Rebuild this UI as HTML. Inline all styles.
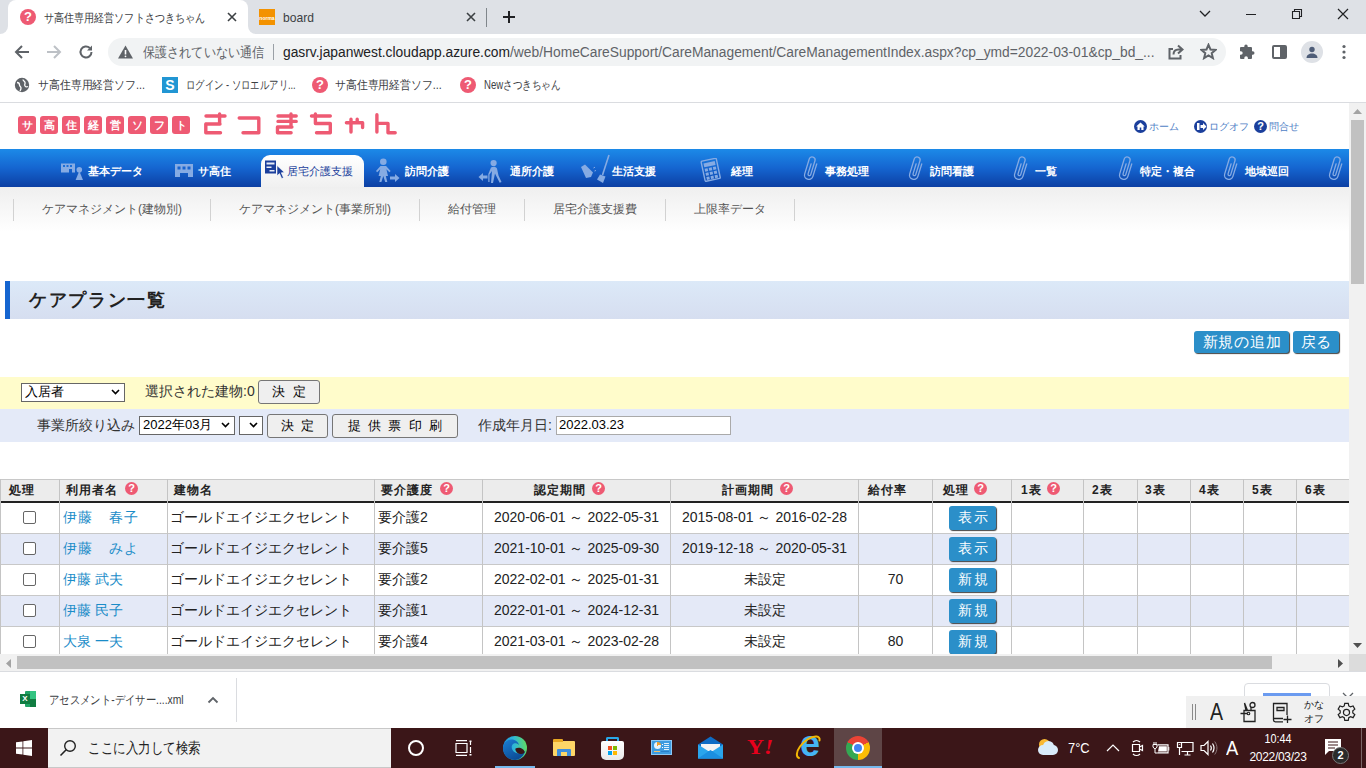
<!DOCTYPE html>
<html lang="ja">
<head>
<meta charset="utf-8">
<title>care plan</title>
<style>
*{box-sizing:border-box;margin:0;padding:0}
html,body{width:1366px;height:768px;overflow:hidden;background:#fff;font-family:"Liberation Sans",sans-serif;color:#202124}
.abs{position:absolute}
#root{position:relative;width:1366px;height:768px;overflow:hidden}
/* chrome */
#tabbar{left:0;top:0;width:1366px;height:34px;background:#dee1e6}
#tab1{left:8px;top:0;width:240px;height:34px;background:#fff;border-radius:8px 8px 0 0}
.tabtxt{font-size:12px;color:#3c4043;top:10px;white-space:nowrap;transform-origin:0 50%}
#toolbar{left:0;top:34px;width:1366px;height:35px;background:#fff}
#omni{left:108px;top:38px;width:1118px;height:28px;border-radius:14px;background:#f1f3f4}
#bm{left:0;top:69px;width:1366px;height:33px;background:#fff}
#bmline{left:0;top:102px;width:1366px;height:1px;background:#dadce0}
.bmt{font-size:12px;color:#3c4043;top:77px;white-space:nowrap;transform-origin:0 50%}
/* page */
#page{left:0;top:103px;width:1349px;height:551px;background:#fff;overflow:hidden}
#vs{left:1349px;top:103px;width:17px;height:551px;background:#f1f1f1}
#vthumb{left:1351px;top:120px;width:13px;height:164px;background:#c1c1c1}
#hs{left:0;top:654px;width:1349px;height:17px;background:#f1f1f1}
#hthumb{left:17px;top:656px;width:1255px;height:13px;background:#c1c1c1}
#corner{left:1349px;top:654px;width:17px;height:17px;background:#dcdcdc}
#shelfline{left:0;top:671px;width:1366px;height:1px;background:#dadce0}
#shelf{left:0;top:672px;width:1366px;height:56px;background:#fff}
#taskbar{left:0;top:728px;width:1366px;height:40px;background:#3b1618}

/* page content */
.lbox{top:13px;width:18px;height:18px;background:#ee5a73;border-radius:3px;color:#fff;font-size:11px;font-weight:bold;line-height:18px;text-align:center}
.lbig{top:5px;font-size:30px;font-weight:bold;color:#ee5a73;line-height:34px;white-space:nowrap}
.toplink{top:17px;font-size:10px;color:#4f7fc6;white-space:nowrap;line-height:13px}
.ticon{top:17px;width:13px;height:13px;border-radius:50%;background:#1b3f9c}
#nav{left:0;top:46px;width:1349px;height:38px;background:linear-gradient(#1c8ae8 0%,#1565d0 50%,#0c3fa3 100%)}
#navact{left:261px;top:52px;width:103px;height:32px;background:linear-gradient(#ffffff,#f0f0f0);border-radius:9px 9px 0 0}
.nt{top:61px;font-size:11px;font-weight:bold;color:#fff;white-space:nowrap;line-height:14px}
.nta{color:#1b3f9c;font-weight:normal}
#sub{left:0;top:84px;width:1349px;height:45px;background:linear-gradient(#efefef,#ffffff)}
.sep{top:96px;width:1px;height:22px;background:#d2d2d2}
.st{top:99px;font-size:12px;color:#555;white-space:nowrap;line-height:15px}
#ttl{left:5px;top:178px;width:1344px;height:38px;background:linear-gradient(#dce9f8,#d6def0);border-left:5px solid #1565d0}
#ttlt{left:29px;top:185px;font-size:18px;font-weight:bold;color:#222;line-height:24px;white-space:nowrap;letter-spacing:1.7px}
.bbtn{top:228px;height:22px;background:#2b8fc9;border-radius:3px;color:#fff;font-size:15px;line-height:22px;text-align:center;box-shadow:1px 1px 1px #444;white-space:nowrap;letter-spacing:.8px;padding-left:1px}
#yrow{left:0;top:274px;width:1349px;height:32px;background:#fffccb}
#brow{left:0;top:306px;width:1349px;height:33px;background:#e4eaf8}
.sel{background:#fff;border:1px solid #666;border-radius:0;font-size:13px;line-height:16px;color:#000;white-space:nowrap;padding-left:3px}
.gbtn{background:#efefef;border:1px solid #767676;border-radius:3px;font-size:13px;color:#000;text-align:center;white-space:nowrap}
.ft{font-size:14px;color:#333;white-space:nowrap;line-height:18px}
.inp{background:#fff;border:1px solid #aaa;font-size:13px;line-height:16px;padding-left:2px;color:#000}

/* table */
#thead{left:0;top:376px;width:1349px;height:24px;background:#ececec;border-top:1px solid #c8c8c8;border-bottom:2px solid #222}
.vl{top:376px;width:1px;height:176px;background:#c4c4c4}
.row{left:0;width:1349px;height:31px;border-bottom:1px solid #c8c8c8}
.alt{background:#e4e9f7}
.th{top:380px;font-size:12px;font-weight:bold;color:#222;white-space:nowrap;line-height:15px;letter-spacing:1px}
.q{width:13px;height:13px;border-radius:50%;background:#ee5a73;top:379px;color:#fff;font-size:11px;font-weight:bold;line-height:13px;text-align:center}
.td{font-size:14px;color:#222;white-space:nowrap;line-height:18px}
.lnk{color:#1a8cc8}
.cb{left:23px;width:13px;height:13px;border:1px solid #666;border-radius:2px;background:#fff}
.rb{left:949px;width:47px;height:24px;background:#2b8fc9;border-radius:3px;color:#fff;font-size:14px;line-height:23px;text-align:center;box-shadow:1px 1px 1px #444;letter-spacing:2px;padding-left:2px}

.qi{width:16px;height:16px;border-radius:50%;background:#ee5a73;color:#fff;font-size:13px;font-weight:bold;line-height:16px;text-align:center}
.ic{stroke:#5f6368;fill:none;stroke-width:2}

.tw{color:#fff;white-space:nowrap}
.ti{stroke:#fff;fill:none;stroke-width:1.2}
</style>
</head>
<body>
<div id="root">
<!-- CHROME -->
<div id="tabbar" class="abs"></div>
<div id="tab1" class="abs"></div>
<div id="toolbar" class="abs"></div>
<div id="omni" class="abs"></div>
<div id="bm" class="abs"></div>
<div id="bmline" class="abs"></div>
<div class="abs qi" style="left:20px;top:9px">?</div>
<div class="abs tabtxt" style="transform:scaleX(.8385);left:44px">サ高住専用経営ソフトさつきちゃん</div>
<svg class="abs" style="left:226px;top:11px" width="12" height="12" viewBox="0 0 12 12"><path d="M2 2l8 8M10 2l-8 8" stroke="#3c4043" stroke-width="1.6" fill="none"/></svg>
<div class="abs" style="left:248px;top:26px;width:8px;height:8px;background:#fff"></div><div class="abs" style="left:248px;top:18px;width:16px;height:16px;background:#dee1e6;border-radius:0 0 0 8px"></div>
<div class="abs" style="left:0px;top:26px;width:8px;height:8px;background:#fff"></div><div class="abs" style="left:-8px;top:18px;width:16px;height:16px;background:#dee1e6;border-radius:0 0 8px 0"></div>
<div class="abs" style="left:259px;top:9px;width:16px;height:16px;background:#f39200;color:#fff;font-size:5px;font-weight:bold;line-height:18px;text-align:center">norma</div>
<div class="abs tabtxt" style="transform:scaleX(.93);left:283px;font-size:13px;top:10px">board</div>
<svg class="abs" style="left:465px;top:11px" width="12" height="12" viewBox="0 0 12 12"><path d="M2 2l8 8M10 2l-8 8" stroke="#3c4043" stroke-width="1.6" fill="none"/></svg>
<div class="abs" style="left:486px;top:8px;width:1px;height:19px;background:#80868b"></div>
<svg class="abs" style="left:502px;top:10px" width="14" height="14" viewBox="0 0 14 14"><path d="M7 1v12M1 7h12" stroke="#202124" stroke-width="2" fill="none"/></svg>
<svg class="abs" style="left:1199px;top:10px" width="12" height="8" viewBox="0 0 12 8"><path d="M1 1l5 5 5-5" stroke="#202124" stroke-width="1.3" fill="none"/></svg>
<div class="abs" style="left:1246px;top:14px;width:10px;height:1px;background:#202124"></div>
<svg class="abs" style="left:1291px;top:8px" width="12" height="12" viewBox="0 0 12 12"><path d="M1.5 3.5h7v7h-7zM3.5 3.5v-2h7v7h-2" stroke="#202124" stroke-width="1.1" fill="none"/></svg>
<svg class="abs" style="left:1337px;top:8px" width="12" height="12" viewBox="0 0 12 12"><path d="M1 1l10 10M11 1L1 11" stroke="#202124" stroke-width="1.2" fill="none"/></svg>
<svg class="abs" style="left:14px;top:44px" width="16" height="16" viewBox="0 0 16 16"><path d="M15 8H2M8 2L2 8l6 6" class="ic" stroke="#5f6368"/></svg>
<svg class="abs" style="left:46px;top:44px" width="16" height="16" viewBox="0 0 16 16"><path d="M1 8h13M8 2l6 6-6 6" class="ic" style="stroke:#bdc1c6"/></svg>
<svg class="abs" style="left:78px;top:44px" width="16" height="16" viewBox="0 0 16 16"><path d="M13.5 8a5.5 5.5 0 1 1-1.7-4" class="ic"/><path d="M14 1.5v5h-5z" fill="#5f6368"/></svg>
<svg class="abs" style="left:118px;top:45px" width="15" height="14" viewBox="0 0 15 14"><path d="M7.5 0.5L15 13.5H0z" fill="#5f6368"/><path d="M7.5 5v4.5" stroke="#fff" stroke-width="1.6"/><circle cx="7.5" cy="11.3" r=".9" fill="#fff"/></svg>
<div id="sec" class="abs" style="transform:scaleX(.866);left:143px;top:43px;font-size:14px;color:#5f6368;white-space:nowrap;line-height:18px;transform-origin:0 50%">保護されていない通信</div>
<div class="abs" style="left:273px;top:44px;width:1px;height:16px;background:#9aa0a6"></div>
<div id="url" class="abs" style="transform-origin:0 50%;transform:scaleX(.9865);left:283px;top:43px;font-size:14px;color:#5f6368;white-space:nowrap;line-height:18px"><span style="color:#202124">gasrv.japanwest.cloudapp.azure.com</span>/web/HomeCareSupport/CareManagement/CareManagementIndex.aspx?cp_ymd=2022-03-01&amp;cp_bd_...</div>
<svg class="abs" style="left:1168px;top:44px" width="16" height="16" viewBox="0 0 16 16"><path d="M5 5H1.5v9.5h11V11" class="ic" stroke-width="1.5"/><path d="M10 1.5l4.5 4-4.5 4M14 5.5h-3.5c-3 0-5 2-5 5" class="ic" stroke-width="1.5"/></svg>
<svg class="abs" style="left:1200px;top:43px" width="17" height="17" viewBox="0 0 17 17"><path d="M8.5 1.8l2 4.7 5 .4-3.8 3.3 1.2 4.9-4.4-2.7-4.4 2.7 1.2-4.9L1.5 6.9l5-.4z" class="ic" stroke-width="1.5"/></svg>
<svg class="abs" style="left:1239px;top:43px" width="17" height="17" viewBox="0 0 17 17"><path d="M7 1.5a1.7 1.7 0 0 1 1.7 1.7V4H12a1 1 0 0 1 1 1v3.3h.8a1.7 1.7 0 0 1 0 3.4H13V15a1 1 0 0 1-1 1H8.9v-.9a1.8 1.8 0 0 0-3.6 0v.9H2a1 1 0 0 1-1-1v-3.200h.9a1.800 1.800 0 0 0 0-3.600H1V5a1 1 0 0 1 1-1h3.300V3.200A1.700 1.700 0 0 1 7 1.500z" fill="#5f6368"/></svg>
<svg class="abs" style="left:1272px;top:45px" width="15" height="14" viewBox="0 0 15 14"><rect x="1" y="1" width="13" height="12" rx="1" class="ic"/><rect x="8" y="1" width="6" height="12" fill="#5f6368"/></svg>
<div class="abs" style="left:1301px;top:41px;width:22px;height:22px;border-radius:50%;background:#dee1e6"></div><svg class="abs" style="left:1305px;top:45px" width="14" height="14" viewBox="0 0 14 14"><circle cx="7" cy="4.500" r="2.700" fill="#4e5d78"/><path d="M1.500 13c0-3 2.500-4.500 5.500-4.500s5.500 1.500 5.500 4.500z" fill="#4e5d78"/></svg>
<svg class="abs" style="left:1342px;top:44px" width="4" height="16" viewBox="0 0 4 16"><circle cx="2" cy="2.500" r="1.600" fill="#5f6368"/><circle cx="2" cy="8" r="1.600" fill="#5f6368"/><circle cx="2" cy="13.500" r="1.600" fill="#5f6368"/></svg>
<svg class="abs" style="left:14px;top:77px" width="16" height="16" viewBox="0 0 16 16"><circle cx="8" cy="8" r="7.200" fill="#5f6368"/><path d="M3 5.500c2 0 2.500 1 2.500 2.500S7 9.500 7 11s-1 3-1 3M9 2.500c0 1.500 1.500 1.500 2 3s-1 2 0 3.500 3 .5 3 .5" stroke="#fff" stroke-width="1.300" fill="none"/></svg>
<div class="abs bmt" style="transform:scaleX(.907);left:38px">サ高住専用経営ソフ...</div>
<div class="abs" style="left:162px;top:77px;width:16px;height:16px;background:#2196d3;color:#fff;font-size:14px;font-weight:bold;line-height:16px;text-align:center">S</div>
<div class="abs bmt" style="transform:scaleX(.78);left:186px">ログイン - ソロエルアリ...</div>
<div class="abs qi" style="left:312px;top:77px">?</div>
<div class="abs bmt" style="transform:scaleX(.904);left:335px">サ高住専用経営ソフ...</div>
<div class="abs qi" style="left:460px;top:77px">?</div>
<div class="abs bmt" style="transform:scaleX(.798);left:484px">Newさつきちゃん</div>
<!-- PAGE -->
<div id="page" class="abs">
<div class="abs lbox" style="left:18px">サ</div>
<div class="abs lbox" style="left:40px">高</div>
<div class="abs lbox" style="left:62px">住</div>
<div class="abs lbox" style="left:84px">経</div>
<div class="abs lbox" style="left:106px">営</div>
<div class="abs lbox" style="left:128px">ソ</div>
<div class="abs lbox" style="left:150px">フ</div>
<div class="abs lbox" style="left:172px">ト</div>
<svg class="abs" style="left:195px;top:1px" width="210" height="40" viewBox="195 104 210 40"><path d="M206 116H225M219.6 114V124M206 124H220M205.8 124V132.7M205.8 132.7H220.5M239.2 118H258.8M258.8 118V132.7M243 132.7H258.8M278 116H296.2M278 121.4H296.2M291 114V127M277.5 127H291.9M277.5 127V132.7M277.5 132.7H291.1M311.5 116H330.3M315.4 114V123.5M315.4 123.5H330.3M330.3 123.5V132.7M316.5 132.7H330.3M346.4 122.8H362.6M362.6 122.8V127.5M351 119.3V132M357.2 119.3V122.8M376.9 114.7V132M376.9 123.4H388M388 123.4V132.7M388 132.7H395.2" stroke="#ee5a73" stroke-width="3.400" stroke-linecap="round" stroke-linejoin="round" fill="none"/></svg>
<div class="abs ticon" style="left:1134px"></div><svg class="abs" style="left:1134px;top:17px" width="13" height="13" viewBox="0 0 13 13"><path d="M6.500 2.500l4.300 4h-1.300v3.500h-2.200v-2.500h-1.600v2.500h-2.200V6.500H2.200z" fill="#fff"/></svg><div class="abs toplink" style="left:1149px">ホーム</div>
<div class="abs ticon" style="left:1194px"></div><svg class="abs" style="left:1194px;top:17px" width="13" height="13" viewBox="0 0 13 13"><path d="M3 3h2.500v7H3zM6.500 5h2.500V3l3.500 3.500L9 10V8H6.500z" fill="#fff"/></svg><div class="abs toplink" style="left:1209px">ログオフ</div>
<div class="abs ticon" style="left:1254px;color:#fff;font-size:11px;font-weight:bold;line-height:13px;text-align:center">?</div><div class="abs toplink" style="left:1269px">問合せ</div>
<div id="nav" class="abs"></div><div id="navact" class="abs"></div>
<div class="abs nt" style="left:88px">基本データ</div>
<div class="abs nt" style="left:198px">サ高住</div>
<div class="abs nt nta" style="left:287px">居宅介護支援</div>
<div class="abs nt" style="left:405px">訪問介護</div>
<div class="abs nt" style="left:510px">通所介護</div>
<div class="abs nt" style="left:612px">生活支援</div>
<div class="abs nt" style="left:731px">経理</div>
<div class="abs nt" style="left:825px">事務処理</div>
<div class="abs nt" style="left:930px">訪問看護</div>
<div class="abs nt" style="left:1035px">一覧</div>
<div class="abs nt" style="left:1140px">特定・複合</div>
<div class="abs nt" style="left:1245px">地域巡回</div>
<svg class="abs" style="left:60px;top:59px" width="25" height="20" viewBox="0 0 25 20"><path d="M1 1.500h14v9h-3v-3.500h-3v3.500H1z" fill="#86abe3"/><path d="M3 3h2v2H3zM6.500 3h2v2h-2zM10 3h2v2h-2z" fill="#1a6ed8"/><circle cx="19.300" cy="7.800" r="2.800" fill="#86abe3"/><path d="M19.300 9l3.700 9h-7.400z" fill="#86abe3"/></svg>
<svg class="abs" style="left:175px;top:61px" width="18" height="14" viewBox="0 0 18 14"><path d="M0 0h18v13h-5v-4h-8v4H0z" fill="#86abe3"/><path d="M2.500 2.500h3v3h-3zM7.500 2.500h3v3h-3zM12.500 2.500h3v3h-3z" fill="#1663cf"/></svg>
<svg class="abs" style="left:264px;top:57px" width="22" height="22" viewBox="0 0 22 22"><path d="M1 .5h11v13H1z" fill="#1b3f9c"/><path d="M2.500 2.500h8v2h-8zM2.500 6.500h5v1.500h-5zM5.500 10h5v1.500h-5z" fill="#e8ecf6"/><path d="M13 5.500l7.500 7-3.200.3 2.200 5-1.800.8-2.200-5-2.500 2.200z" fill="#1b3f9c" stroke="#fff" stroke-width=".6"/></svg>
<svg class="abs" style="left:376px;top:55px" width="24" height="26" viewBox="0 0 24 26"><circle cx="7.300" cy="3.800" r="3.300" fill="#86abe3"/><path d="M4.500 8h5.600l4.500 5-1.200 1.200-3-3 1.600 6.800H9.800l1.500 6H9.200l-1.900-6-1.900 6H3.300l1.500-6H2.600l1.600-6.800-3 3L0 13z" fill="#86abe3"/><path d="M14 18.500h5v-2.500l4.500 4-4.500 4v-2.500h-5z" fill="#86abe3"/></svg>
<svg class="abs" style="left:478px;top:56px" width="26" height="25" viewBox="0 0 26 25"><circle cx="15.600" cy="4" r="3.100" fill="#86abe3"/><path d="M13 8.500c2-1.500 5-1 6 1l1.500 7 3 6.500-1.800.8-3.200-6.300-1.500-3-2 9.500h-2l1-12-2.500 3.500v7.500h-1.200v-8z" fill="#86abe3"/><path d="M9.500 16.500h-4.500v-2.500L.5 18l4.500 4v-2.500h4.500z" fill="#86abe3"/></svg>
<svg class="abs" style="left:580px;top:51px" width="32" height="30" viewBox="0 0 32 30"><path d="M1 13l4-2.500 8 8-2 4.500-5 1z" fill="#86abe3"/><path d="M13.500 14l1.500-.8M14.500 17l1.500-.5" stroke="#86abe3" stroke-width="1"/><path d="M29 1l-6.500 20" stroke="#86abe3" stroke-width="1.600"/><path d="M20 20.500l5.500 2-2.500 6.500-6-3.500z" fill="#86abe3"/></svg>
<svg class="abs" style="left:700px;top:55px" width="22" height="24" viewBox="0 0 22 24"><g transform="rotate(-12 11 12)"><rect x="3" y="1.500" width="15.500" height="20.500" rx="1" fill="none" stroke="#86abe3" stroke-width="1.400"/><path d="M5 4h11.500v4H5z" fill="#86abe3"/><path d="M5 9.500h3v3H5zM9.200 9.500h3v3h-3zM13.400 9.500h3v3h-3zM5 13.700h3v3H5zM9.200 13.700h3v3h-3zM13.400 13.700h3v3h-3zM5 17.900h3v3H5zM9.200 17.900h3v3h-3zM13.400 17.900h3v3h-3z" fill="#86abe3"/></g></svg>
<svg class="abs" style="left:800px;top:51px" width="22" height="30" viewBox="0 0 22 30"><g transform="rotate(17 11 15)"><path d="M15 8.500v13a4.300 4.300 0 0 1-8.600 0V6a3 3 0 0 1 6 0v14.500a1.400 1.400 0 0 1-2.800 0V10" fill="none" stroke="#86abe3" stroke-width="1.300" stroke-linecap="round"/></g></svg>
<svg class="abs" style="left:905px;top:51px" width="22" height="30" viewBox="0 0 22 30"><g transform="rotate(17 11 15)"><path d="M15 8.500v13a4.300 4.300 0 0 1-8.600 0V6a3 3 0 0 1 6 0v14.500a1.400 1.400 0 0 1-2.800 0V10" fill="none" stroke="#86abe3" stroke-width="1.300" stroke-linecap="round"/></g></svg>
<svg class="abs" style="left:1010px;top:51px" width="22" height="30" viewBox="0 0 22 30"><g transform="rotate(17 11 15)"><path d="M15 8.500v13a4.300 4.300 0 0 1-8.600 0V6a3 3 0 0 1 6 0v14.500a1.400 1.400 0 0 1-2.800 0V10" fill="none" stroke="#86abe3" stroke-width="1.300" stroke-linecap="round"/></g></svg>
<svg class="abs" style="left:1115px;top:51px" width="22" height="30" viewBox="0 0 22 30"><g transform="rotate(17 11 15)"><path d="M15 8.500v13a4.300 4.300 0 0 1-8.600 0V6a3 3 0 0 1 6 0v14.500a1.400 1.400 0 0 1-2.800 0V10" fill="none" stroke="#86abe3" stroke-width="1.300" stroke-linecap="round"/></g></svg>
<svg class="abs" style="left:1220px;top:51px" width="22" height="30" viewBox="0 0 22 30"><g transform="rotate(17 11 15)"><path d="M15 8.500v13a4.300 4.300 0 0 1-8.600 0V6a3 3 0 0 1 6 0v14.500a1.400 1.400 0 0 1-2.800 0V10" fill="none" stroke="#86abe3" stroke-width="1.300" stroke-linecap="round"/></g></svg>
<svg class="abs" style="left:1325px;top:51px" width="22" height="30" viewBox="0 0 22 30"><g transform="rotate(17 11 15)"><path d="M15 8.500v13a4.300 4.300 0 0 1-8.600 0V6a3 3 0 0 1 6 0v14.500a1.400 1.400 0 0 1-2.800 0V10" fill="none" stroke="#86abe3" stroke-width="1.300" stroke-linecap="round"/></g></svg>
<div id="sub" class="abs"></div>
<div class="abs sep" style="left:13px"></div>
<div class="abs sep" style="left:210px"></div>
<div class="abs sep" style="left:419px"></div>
<div class="abs sep" style="left:524px"></div>
<div class="abs sep" style="left:665px"></div>
<div class="abs sep" style="left:794px"></div>
<div class="abs st" style="left:42px">ケアマネジメント(建物別)</div>
<div class="abs st" style="left:239px">ケアマネジメント(事業所別)</div>
<div class="abs st" style="left:448px">給付管理</div>
<div class="abs st" style="left:553px">居宅介護支援費</div>
<div class="abs st" style="left:694px">上限率データ</div>
<div id="ttl" class="abs"></div><div id="ttlt" class="abs">ケアプラン一覧</div>
<div class="abs bbtn" style="left:1194px;width:95px">新規の追加</div><div class="abs bbtn" style="left:1293px;width:46px">戻る</div>
<div id="yrow" class="abs"></div><div id="brow" class="abs"></div>
<div class="abs sel" style="left:21px;top:280px;width:104px;height:19px">入居者<svg class="abs" style="right:4px;top:5px" width="9" height="6" viewBox="0 0 9 6"><path d="M1 1l3.5 3.5L8 1" fill="none" stroke="#000" stroke-width="1.6"/></svg></div>
<div class="abs ft" style="left:145px;top:279px">選択された建物:0</div>
<div class="abs gbtn" style="left:258px;top:277px;width:62px;height:24px;line-height:22px">決&nbsp;&nbsp;定</div>
<div class="abs ft" style="left:37px;top:313px">事業所絞り込み</div>
<div class="abs sel" style="left:139px;top:313px;width:96px;height:19px">2022年03月<svg class="abs" style="right:4px;top:5px" width="9" height="6" viewBox="0 0 9 6"><path d="M1 1l3.5 3.5L8 1" fill="none" stroke="#000" stroke-width="1.6"/></svg></div>
<div class="abs sel" style="left:239px;top:313px;width:24px;height:19px"><svg class="abs" style="right:4px;top:5px" width="9" height="6" viewBox="0 0 9 6"><path d="M1 1l3.5 3.5L8 1" fill="none" stroke="#000" stroke-width="1.6"/></svg></div>
<div class="abs gbtn" style="left:267px;top:311px;width:61px;height:24px;line-height:22px">決&nbsp;&nbsp;定</div>
<div class="abs gbtn" style="left:332px;top:311px;width:126px;height:24px;line-height:22px">提&nbsp;&nbsp;供&nbsp;&nbsp;票&nbsp;&nbsp;印&nbsp;&nbsp;刷</div>
<div class="abs ft" style="left:478px;top:313px">作成年月日:</div>
<div class="abs inp" style="left:556px;top:313px;width:175px;height:19px">2022.03.23</div>
<div class="abs row" style="top:400px"></div>
<div class="abs row alt" style="top:431px"></div>
<div class="abs row" style="top:462px"></div>
<div class="abs row alt" style="top:493px"></div>
<div class="abs row" style="top:524px"></div>
<div id="thead" class="abs"></div>
<div class="abs vl" style="left:0px"></div>
<div class="abs vl" style="left:59px"></div>
<div class="abs vl" style="left:167px"></div>
<div class="abs vl" style="left:374px"></div>
<div class="abs vl" style="left:482px"></div>
<div class="abs vl" style="left:670px"></div>
<div class="abs vl" style="left:858px"></div>
<div class="abs vl" style="left:932px"></div>
<div class="abs vl" style="left:1011px"></div>
<div class="abs vl" style="left:1083px"></div>
<div class="abs vl" style="left:1137px"></div>
<div class="abs vl" style="left:1190px"></div>
<div class="abs vl" style="left:1243px"></div>
<div class="abs vl" style="left:1296px"></div>
<div class="abs th" style="left:9px">処理</div>
<div class="abs th" style="left:66px">利用者名</div>
<div class="abs th" style="left:174px">建物名</div>
<div class="abs th" style="left:381px">要介護度</div>
<div class="abs th" style="left:534px">認定期間</div>
<div class="abs th" style="left:722px">計画期間</div>
<div class="abs th" style="left:868px">給付率</div>
<div class="abs th" style="left:943px">処理</div>
<div class="abs th" style="left:1021px">1表</div>
<div class="abs th" style="left:1092px">2表</div>
<div class="abs th" style="left:1145px">3表</div>
<div class="abs th" style="left:1199px">4表</div>
<div class="abs th" style="left:1252px">5表</div>
<div class="abs th" style="left:1305px">6表</div>
<div class="abs q" style="left:125px">?</div>
<div class="abs q" style="left:440px">?</div>
<div class="abs q" style="left:592px">?</div>
<div class="abs q" style="left:780px">?</div>
<div class="abs q" style="left:974px">?</div>
<div class="abs q" style="left:1047px">?</div>
<div class="abs cb" style="top:408px"></div>
<div class="abs td lnk" style="left:63px;top:405px" ><span style="letter-spacing:1.2px">伊藤　春子</span></div>
<div class="abs td" style="left:170px;top:405px">ゴールドエイジエクセレント</div>
<div class="abs td" style="left:378px;top:405px">要介護2</div>
<div class="abs td" style="left:483px;top:405px;width:187px;text-align:center">2020-06-01 ～ 2022-05-31</div>
<div class="abs td" style="left:671px;top:405px;width:187px;text-align:center">2015-08-01 ～ 2016-02-28</div>
<div class="abs rb" style="top:403px">表示</div>
<div class="abs cb" style="top:439px"></div>
<div class="abs td lnk" style="left:63px;top:436px"><span style="letter-spacing:1.2px">伊藤　みよ</span></div>
<div class="abs td" style="left:170px;top:436px">ゴールドエイジエクセレント</div>
<div class="abs td" style="left:378px;top:436px">要介護5</div>
<div class="abs td" style="left:483px;top:436px;width:187px;text-align:center">2021-10-01 ～ 2025-09-30</div>
<div class="abs td" style="left:671px;top:436px;width:187px;text-align:center">2019-12-18 ～ 2020-05-31</div>
<div class="abs rb" style="top:434px">表示</div>
<div class="abs cb" style="top:470px"></div>
<div class="abs td lnk" style="left:63px;top:467px">伊藤 武夫</div>
<div class="abs td" style="left:170px;top:467px">ゴールドエイジエクセレント</div>
<div class="abs td" style="left:378px;top:467px">要介護2</div>
<div class="abs td" style="left:483px;top:467px;width:187px;text-align:center">2022-02-01 ～ 2025-01-31</div>
<div class="abs td" style="left:671px;top:467px;width:187px;text-align:center">未設定</div>
<div class="abs td" style="left:859px;top:467px;width:73px;text-align:center">70</div>
<div class="abs rb" style="top:465px">新規</div>
<div class="abs cb" style="top:501px"></div>
<div class="abs td lnk" style="left:63px;top:498px">伊藤 民子</div>
<div class="abs td" style="left:170px;top:498px">ゴールドエイジエクセレント</div>
<div class="abs td" style="left:378px;top:498px">要介護1</div>
<div class="abs td" style="left:483px;top:498px;width:187px;text-align:center">2022-01-01 ～ 2024-12-31</div>
<div class="abs td" style="left:671px;top:498px;width:187px;text-align:center">未設定</div>
<div class="abs rb" style="top:496px">新規</div>
<div class="abs cb" style="top:532px"></div>
<div class="abs td lnk" style="left:63px;top:529px">大泉 一夫</div>
<div class="abs td" style="left:170px;top:529px">ゴールドエイジエクセレント</div>
<div class="abs td" style="left:378px;top:529px">要介護4</div>
<div class="abs td" style="left:483px;top:529px;width:187px;text-align:center">2021-03-01 ～ 2023-02-28</div>
<div class="abs td" style="left:671px;top:529px;width:187px;text-align:center">未設定</div>
<div class="abs td" style="left:859px;top:529px;width:73px;text-align:center">80</div>
<div class="abs rb" style="top:527px">新規</div>
</div>
<div id="vs" class="abs"></div><div id="vthumb" class="abs"></div>
<div id="hs" class="abs"></div><div id="hthumb" class="abs"></div><div id="corner" class="abs"></div>
<svg class="abs" style="left:1353px;top:109px" width="9" height="5" viewBox="0 0 9 5"><path d="M0 5l4.500-5L9 5z" fill="#a3a3a3"/></svg>
<svg class="abs" style="left:1353px;top:643px" width="9" height="5" viewBox="0 0 9 5"><path d="M0 0l4.500 5L9 0z" fill="#505050"/></svg>
<svg class="abs" style="left:6px;top:659px" width="5" height="9" viewBox="0 0 5 9"><path d="M5 0L0 4.500 5 9z" fill="#a3a3a3"/></svg>
<svg class="abs" style="left:1338px;top:659px" width="5" height="9" viewBox="0 0 5 9"><path d="M0 0l5 4.500L0 9z" fill="#505050"/></svg>
<div id="shelfline" class="abs"></div>
<div id="shelf" class="abs"></div>
<div class="abs" style="left:20px;top:691px;width:16px;height:16px"><div class="abs" style="left:5px;top:0;width:11px;height:16px;background:#21a366;border-radius:1px"></div><div class="abs" style="left:10px;top:0;width:6px;height:8px;background:#33c481"></div><div class="abs" style="left:10px;top:8px;width:6px;height:8px;background:#107c41"></div><div class="abs" style="left:0;top:3px;width:10px;height:10px;background:#107c41;color:#fff;font-size:8px;font-weight:bold;line-height:10px;text-align:center">X</div></div>
<div id="dl" class="abs" style="transform:scaleX(.863);left:49px;top:692px;font-size:12px;color:#3c4043;white-space:nowrap;line-height:16px;transform-origin:0 50%">アセスメント-デイサー....xml</div>
<svg class="abs" style="left:207px;top:696px" width="12" height="8" viewBox="0 0 12 8"><path d="M1.500 6.500l4.500-4.500 4.500 4.500" stroke="#5f6368" stroke-width="1.800" fill="none"/></svg>
<div class="abs" style="left:236px;top:678px;width:1px;height:44px;background:#dadce0"></div>
<div class="abs" style="left:1244px;top:683px;width:86px;height:32px;border:1px solid #dadce0;border-radius:4px;background:#fff"></div>
<div class="abs" style="left:1263px;top:693px;width:48px;height:4px;background:#6b9bf0"></div>
<svg class="abs" style="left:1342px;top:692px" width="12" height="12" viewBox="0 0 12 12"><path d="M1 1l10 10M11 1L1 11" stroke="#5f6368" stroke-width="1.300" fill="none"/></svg>
<div class="abs" style="left:1186px;top:696px;width:180px;height:32px;background:#f0f0f0"></div>
<div class="abs" style="left:1192px;top:704px;width:1px;height:16px;background:#8a8a8a"></div><div class="abs" style="left:1195px;top:704px;width:1px;height:16px;background:#8a8a8a"></div>
<div class="abs" style="left:1210px;top:699px;font-size:23px;line-height:26px;color:#222;transform:scaleX(.85);transform-origin:0 0">A</div>
<svg class="abs" style="left:1239px;top:701px" width="20" height="22" viewBox="0 0 20 22"><path d="M5 9.500h11v11H5zM1.500 12.500h8M7 9.500L5.500 2l3 7.500M12 9V6" stroke="#222" stroke-width="1.300" fill="none"/><circle cx="13.500" cy="4" r="2.500" stroke="#222" stroke-width="1.300" fill="none"/><circle cx="9.500" cy="12.500" r="1.300" stroke="#222" stroke-width="1.100" fill="#f0f0f0"/></svg>
<svg class="abs" style="left:1271px;top:702px" width="22" height="21" viewBox="0 0 22 21"><path d="M16 13V1.500H2.500v16.500a1.800 1.800 0 0 0 1.800 1.800H12M2.500 16.500h9.500M6 5.500h7v3H6zM12.500 17.500h8M16.500 13.500v8" stroke="#222" stroke-width="1.300" fill="none"/></svg>
<div class="abs" style="left:1303px;top:698px;font-size:10px;line-height:14px;color:#222;width:22px;text-align:center;white-space:nowrap">かな<br>オフ</div>
<svg class="abs" style="left:1336px;top:702px" width="21" height="21" viewBox="0 0 24 24"><path d="M12 8.500a3.500 3.500 0 1 0 0 7 3.500 3.500 0 0 0 0-7zM10 1.500h4l.6 3 2 1.100 2.900-1 2 3.500-2.300 2v2.300l2.300 2-2 3.500-2.900-1-2 1.100-.6 3h-4l-.6-3-2-1.100-2.900 1-2-3.500 2.300-2v-2.300l-2.300-2 2-3.500 2.900 1 2-1.100z" stroke="#222" stroke-width="1.400" fill="none"/></svg>
<div id="taskbar" class="abs"></div>
<svg class="abs" style="left:16px;top:740px" width="16" height="16" viewBox="0 0 16 16"><path d="M0 2.300l6.500-.900v6.200H0zM7.300 1.300L16 0v7.600H7.300zM0 8.400h6.500v6.200L0 13.700zM7.300 8.400H16V16l-8.700-1.300z" fill="#fff"/></svg>
<div class="abs" style="left:48px;top:728px;width:343px;height:40px;background:#f2f2f2;border-top:1px solid #c8c8c8;border-bottom:1px solid #c8c8c8"></div>
<svg class="abs" style="left:59px;top:739px" width="18" height="18" viewBox="0 0 18 18"><circle cx="11" cy="7" r="5.300" stroke="#222" stroke-width="1.400" fill="none"/><path d="M7.200 10.800L1.500 16.500" stroke="#222" stroke-width="1.600"/></svg>
<div id="srch" class="abs" style="transform:scaleX(.835);left:88px;top:738px;font-size:15px;line-height:20px;color:#222;white-space:nowrap;transform-origin:0 50%">ここに入力して検索</div>
<div class="abs" style="left:408px;top:740px;width:16px;height:16px;border:2px solid #fff;border-radius:50%"></div>
<svg class="abs" style="left:455px;top:740px" width="18" height="16" viewBox="0 0 18 16"><path d="M1 3.500h11v9H1zM1 .700h11M1 15.300h11M15.500 2v3M15.500 7v6" class="ti" stroke-width="1.400"/><path d="M14.500 .5h2v1.500h-2zM14.500 14h2v1.500h-2z" fill="#fff"/></svg>
<svg class="abs" style="left:502px;top:735px" width="26" height="26" viewBox="0 0 26 26"><defs><linearGradient id="eg1" x1="0" y1="0.300" x2="1" y2="0.200"><stop offset="0" stop-color="#1e8fdc"/><stop offset=".45" stop-color="#2fb8d8"/><stop offset="1" stop-color="#62dc5c"/></linearGradient><linearGradient id="eg2" x1="0" y1="0" x2="0.600" y2="1"><stop offset="0" stop-color="#1b7fd4"/><stop offset="1" stop-color="#0b4a94"/></linearGradient></defs><circle cx="13" cy="13" r="12" fill="url(#eg1)"/><path d="M1 13c0-5 4-8.500 8.500-8.500 4 0 7 2.500 7.500 5.500-1.500-1.500-3.500-2-5-1.500-2.500 1-3 4-1.500 6.500 1.700 2.800 5.500 4 9 3 1.500-.5 3-1.500 4-2.500-1.500 5.500-6 9.500-10.500 9.500C6 25 1 19.500 1 13z" fill="url(#eg2)"/><path d="M13.500 13.500c2-1 5-1 7 .5 2 1.500 2.500 3 1.500 4-1.500 1.200-4.500 1.500-6.500 0-1.500-1.200-2.500-3-2-4.500z" fill="#3a1517"/></svg>
<div class="abs" style="left:495px;top:766px;width:40px;height:2px;background:#76b9ed"></div>
<div class="abs" style="left:553px;top:741px;width:22px;height:15px;background:#fdd667;border-radius:1px"></div><div class="abs" style="left:553px;top:739px;width:10px;height:3px;background:#e8a823;border-radius:1px 1px 0 0"></div><div class="abs" style="left:557px;top:749px;width:14px;height:7px;background:#3f8fdc;border-radius:1px 1px 0 0"></div><div class="abs" style="left:561px;top:752px;width:6px;height:4px;background:#fdd667"></div>
<div class="abs" style="left:606px;top:737px;width:13px;height:7px;border:2px solid #29a8e8;border-bottom:none;border-radius:2px 2px 0 0"></div><div class="abs" style="left:601px;top:741px;width:23px;height:19px;background:linear-gradient(#fff,#e9e9e9);border-radius:2px 2px 5px 5px"></div><div class="abs" style="left:608px;top:746px;width:4px;height:4px;background:#f25022"></div><div class="abs" style="left:613px;top:746px;width:4px;height:4px;background:#7fba00"></div><div class="abs" style="left:608px;top:751px;width:4px;height:4px;background:#00a4ef"></div><div class="abs" style="left:613px;top:751px;width:4px;height:4px;background:#ffb900"></div>
<div class="abs" style="left:651px;top:740px;width:21px;height:15px;background:#3d9be0;border:1px solid #8cc8f5"></div><div class="abs" style="left:654px;top:742px;width:7px;height:7px;border-radius:50%;background:conic-gradient(#f0a030 0 90deg,#e8f4fd 90deg 360deg)"></div><div class="abs" style="left:664px;top:743px;width:5px;height:1px;background:#dff0fb;box-shadow:0 2px 0 #dff0fb,0 4px 0 #dff0fb,0 6px 0 #dff0fb"></div><div class="abs" style="left:662px;top:744px;width:1px;height:1px;background:#fff;box-shadow:0 3px 0 #fff"></div><div class="abs" style="left:654px;top:751px;width:6px;height:1px;background:#f0c070"></div><div class="abs" style="left:661px;top:751px;width:8px;height:1px;background:#2a7fc8"></div>
<svg class="abs" style="left:698px;top:736px" width="25" height="23" viewBox="0 0 25 23"><path d="M0 8.500L12.500 .5 25 8.500v14H0z" fill="#0f6cc4"/><path d="M3 8h19v7H3z" fill="#f4f4f4"/><path d="M0 8.500l12.500 8L25 8.500v14H0z" fill="#2aa5ec"/><path d="M0 22.500L12.500 14 25 22.500z" fill="#1b8fe0"/></svg>
<div class="abs" style="left:747px;top:735px;font-family:'Liberation Serif',serif;font-size:20px;font-weight:bold;color:#e8001c;line-height:24px;white-space:nowrap;transform:scaleX(1.18);transform-origin:0 0">Y<span style="font-style:italic">!</span></div>
<div class="abs" style="left:800px;top:726px;font-size:36px;font-weight:bold;color:#45b4f2;line-height:36px">e</div><svg class="abs" style="left:794px;top:733px" width="30" height="28" viewBox="0 0 30 28"><path d="M5 25c-3-1-3-6 1-11.500S17 3 22.500 3.500c2.500.3 3.500 2 3 4" stroke="#f2b705" stroke-width="2" fill="none" stroke-linecap="round"/></svg>
<div class="abs" style="left:834px;top:728px;width:48px;height:40px;background:#5e4546"></div><div class="abs" style="left:834px;top:766px;width:48px;height:2px;background:#76b9ed"></div>
<div class="abs" style="left:846px;top:736px;width:24px;height:24px;border-radius:50%;background:conic-gradient(from -60deg,#ea4335 0 120deg,#fbbc05 120deg 240deg,#34a853 240deg 360deg)"></div><div class="abs" style="left:852px;top:742px;width:12px;height:12px;border-radius:50%;background:#fff"></div><div class="abs" style="left:854px;top:744px;width:8px;height:8px;border-radius:50%;background:#4285f4"></div>
<div class="abs" style="left:1039px;top:739px;width:11px;height:11px;border-radius:50%;background:#f9b934"></div><div class="abs" style="left:1038px;top:745px;width:20px;height:10px;border-radius:5px;background:#d9ecfb"></div><div class="abs" style="left:1043px;top:741px;width:11px;height:11px;border-radius:50%;background:#d9ecfb"></div>
<div class="abs tw" style="left:1068px;top:739px;font-size:14px;line-height:18px;transform:scaleX(.92);transform-origin:0 0">7°C</div>
<svg class="abs" style="left:1106px;top:743px" width="14" height="9" viewBox="0 0 14 9"><path d="M1 8l6-6 6 6" class="ti" stroke-width="1.400"/></svg>
<svg class="abs" style="left:1131px;top:739px" width="13" height="18" viewBox="0 0 13 18"><path d="M1.500 5.500h7v7h-7zM8.500 8l3-1.500v5l-3-1.500M2 3c2-2 5-2 7 0M2 15c2 2 5 2 7 0" class="ti"/></svg>
<svg class="abs" style="left:1152px;top:741px" width="18" height="14" viewBox="0 0 18 14"><path d="M5.500 3.800h10.500v8h-10.500" class="ti" stroke-width="1.100"/><path d="M16.300 6h1v3.500h-1z" fill="#fff"/><path d="M7 5.200h7.800v5.200H6z" fill="#fff"/><path d="M2 1v2.500M4 1v2.500M1 3.500h4v2.500l-1.200 1.500H2.200L1 6zM3 7.500V12h2.500" stroke="#fff" stroke-width="1" fill="none"/></svg>
<svg class="abs" style="left:1176px;top:741px" width="18" height="15" viewBox="0 0 18 15"><path d="M5.500 1.500h11.500v9H5.500M8.500 14h6M11.500 10.500v3.500M1.500 1.500h4v5h-4zM3.500 6.500V14" class="ti" stroke-width="1.100"/><path d="M2.500 3l1 1 1-1z" fill="#fff"/></svg>
<svg class="abs" style="left:1200px;top:740px" width="18" height="16" viewBox="0 0 18 16"><path d="M1 5.500h3l4-4v13l-4-4H1z" class="ti"/><path d="M10.500 5.500c1 1.500 1 3.500 0 5M12.500 3.500c2 3 2 6 0 9" class="ti" stroke-width="1"/><path d="M14.700 1.500c3 4 3 9 0 13" stroke="#8a7577" stroke-width="1" fill="none"/></svg>
<div class="abs tw" style="left:1226px;top:736px;font-size:20px;line-height:24px;transform:scaleX(.92);transform-origin:0 0">A</div>
<div class="abs tw" style="left:1249px;top:732px;width:58px;text-align:center;font-size:12px;line-height:15px;transform:scaleX(.9)">10:44</div>
<div class="abs tw" style="left:1245px;top:750px;width:66px;text-align:center;font-size:12px;line-height:15px;letter-spacing:-.3px">2022/03/23</div>
<svg class="abs" style="left:1325px;top:739px" width="16" height="16" viewBox="0 0 16 16"><path d="M0 0h16v12H4l-4 4z" fill="#fff"/><path d="M3 3h10M3 6h10M3 9h7" stroke="#3a1517" stroke-width="1.200"/></svg>
<div class="abs" style="left:1332px;top:747px;width:17px;height:17px;border-radius:50%;background:#2b2b2b;border:1px solid #777;color:#fff;font-size:11px;font-weight:bold;line-height:15px;text-align:center">2</div>
<div class="abs" style="left:1361px;top:728px;width:1px;height:40px;background:#7a6566"></div>
</div>
</body>
</html>
